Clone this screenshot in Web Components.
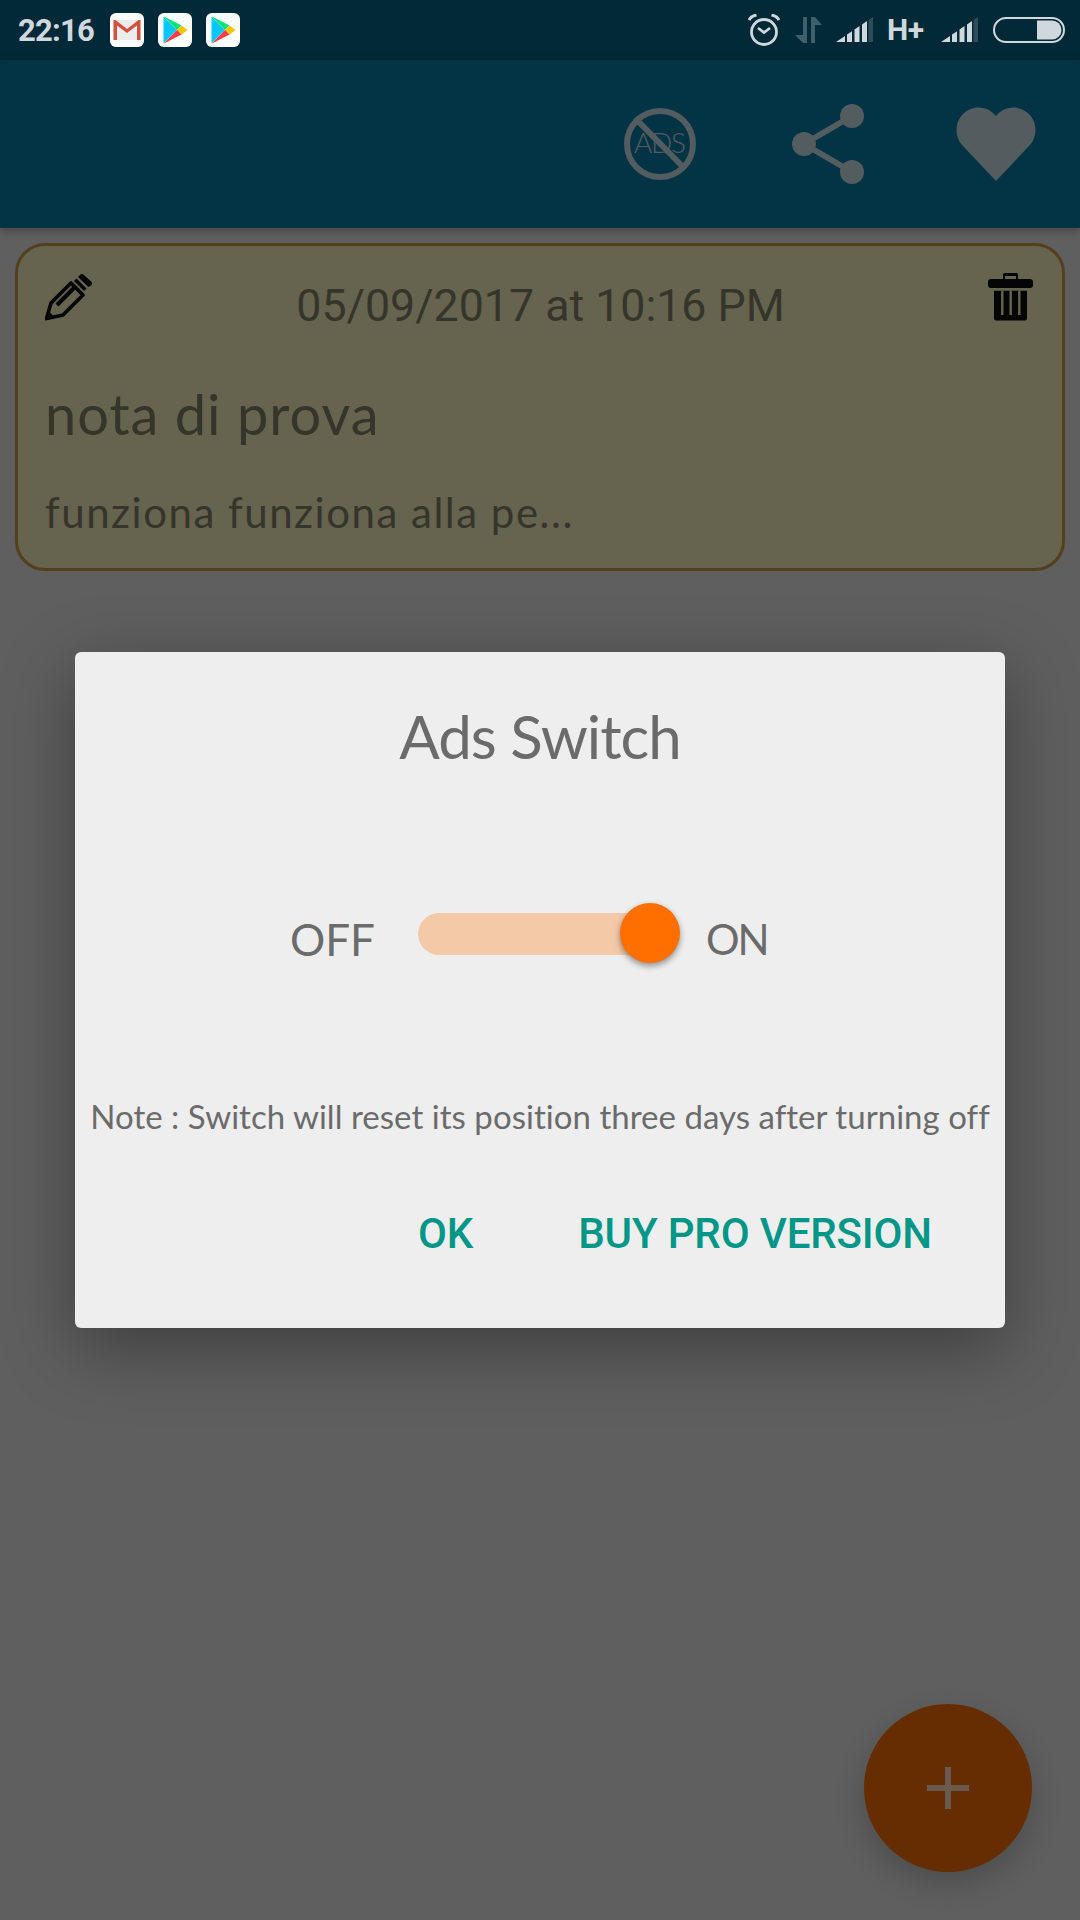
<!DOCTYPE html>
<html>
<head>
<meta charset="utf-8">
<style>
  html, body { margin: 0; padding: 0; background: #5f5f5f; }
</style>
</head>
<body>
<app-shell>
  <note-card date="05/09/2017 at 10:16 PM" title="nota di prova" text="funziona funziona alla pe..."></note-card>
  <ads-dialog slot="overlay"></ads-dialog>
  <fab-button slot="overlay"></fab-button>
</app-shell>

<script>
const PLAY = `<svg width="34" height="34" viewBox="0 0 34 34"><rect width="34" height="34" rx="6" fill="#fff"/>
  <path d="M5.500 3.500L19 17L5.500 30.500Z" fill="#00c8ff"/>
  <path d="M5.500 3.300L23.500 12.500L19 17Z" fill="#00e676"/>
  <path d="M23.500 12.500L29.600 17L23.500 21.500L19 17Z" fill="#ffc400"/>
  <path d="M5.500 30.700L19 17L23.500 21.500Z" fill="#ff3a44"/></svg>`;

const SIGNAL = `<svg width="37" height="26" viewBox="0 0 37 26">
  <path d="M0 25L9 19V25Z" fill="#cfd8dc"/>
  <path d="M11 17.600L16 14.200V25H11Z" fill="#cfd8dc"/>
  <path d="M18.500 12.500L23.500 9.100V25H18.500Z" fill="#cfd8dc"/>
  <path d="M26 7.400L31 4V25H26Z" fill="#cfd8dc"/>
  <path d="M32.500 3L37 0V25H32.500Z" fill="#2f4d59"/></svg>`;

class StatusBar extends HTMLElement {
  constructor() {
    super();
    this.attachShadow({ mode: 'open' });
  }
  connectedCallback() {
    this.shadowRoot.innerHTML = `
      <style>
        :host { display: flex; align-items: center; height: 60px; background: #022937; padding: 0 15px 0 18px; box-sizing: border-box; color: #cfd8dc; font-family: Roboto, sans-serif; }
        .time { font-size: 31px; font-weight: 700; letter-spacing: -0.8px; width: 92px; }
        .apps { display: flex; gap: 14px; }
        .apps svg { display: block; }
        .sys { margin-left: auto; display: flex; align-items: center; }
        .sys svg { display: block; }
        .hplus { font-size: 30px; font-weight: 700; line-height: 30px; width: 36px; margin: 0 18px 0 14px; letter-spacing: -0.5px; }
      </style>
      <span class="time">22:16</span>
      <div class="apps">
        <svg width="34" height="34" viewBox="0 0 34 34"><rect width="34" height="34" rx="6" fill="#fff"/>
          <rect x="3.500" y="7" width="27" height="20" fill="#ececec"/>
          <path d="M3.500 27V7H5.500L17 16L28.500 7H30.500V27H27V12.500L17 20L7 12.500V27Z" fill="#d1513f"/></svg>
        ${PLAY}${PLAY}
      </div>
      <div class="sys">
        <svg width="32" height="32" viewBox="0 0 32 32" style="margin-right:15px">
          <circle cx="16" cy="18" r="12.500" fill="none" stroke="#cfd8dc" stroke-width="2.800"/>
          <path d="M10 14L16 18.500L22 14" fill="none" stroke="#cfd8dc" stroke-width="2.800"/>
          <path d="M1 6Q3 2 8.500 1M23.500 1Q29 2 31 6" fill="none" stroke="#cfd8dc" stroke-width="3"/></svg>
        <svg width="27" height="26" viewBox="0 0 27 26" style="margin-right:14px">
          <path d="M8 0H12V26H8L0 18H8Z" fill="#3f5f6b"/>
          <path d="M16 26V0H20L27 8H20V26Z" fill="#3f5f6b"/></svg>
        ${SIGNAL}
        <span class="hplus">H+</span>
        ${SIGNAL}
        <svg width="72" height="26" viewBox="0 0 72 26" style="margin-left:15px">
          <rect x="1" y="1" width="70" height="24" rx="12" fill="none" stroke="#cfd8dc" stroke-width="2"/>
          <path d="M44 3.500H59A9.500 9.500 0 0 1 59 22.500H44Z" fill="#cfd8dc"/></svg>
      </div>
    `;
  }
}
customElements.define('status-bar', StatusBar);

class AppBar extends HTMLElement {
  constructor() {
    super();
    this.attachShadow({ mode: 'open' });
  }
  connectedCallback() {
    this.shadowRoot.innerHTML = `
      <style>
        :host { display: flex; justify-content: flex-end; align-items: center; height: 168px; background: #033445; padding-right: 44px; box-sizing: border-box; box-shadow: 0 3px 8px rgba(0,0,0,.28); position: relative; }
        svg { display: block; }
      </style>
      <svg width="72" height="72" viewBox="0 0 72 72" style="margin-right:96px">
        <circle cx="36" cy="36" r="33" fill="none" stroke="#535c5e" stroke-width="6"/>
        <path d="M11 10L61 61" stroke="#535c5e" stroke-width="6"/>
        <text x="10" y="45" textLength="52" lengthAdjust="spacing" font-family="Lato, sans-serif" font-size="28" font-weight="300" fill="#535c5e">ADS</text>
      </svg>
      <svg width="72" height="80" viewBox="0 0 72 80" style="margin-right:92px">
        <path d="M12 40L60 12M12 40L60 68" stroke="#535c5e" stroke-width="6"/>
        <circle cx="12" cy="40" r="12" fill="#535c5e"/>
        <circle cx="60" cy="12" r="12" fill="#535c5e"/>
        <circle cx="60" cy="68" r="12" fill="#535c5e"/>
      </svg>
      <svg width="80" height="74" viewBox="0 0 80 74">
        <path d="M40 74L6 38C-2 29 -1 15 7 7C16 -2 31 -2 40 9C49 -2 64 -2 73 7C81 15 82 29 74 38Z" fill="#535c5e"/>
      </svg>
    `;
  }
}
customElements.define('app-bar', AppBar);

class NoteCard extends HTMLElement {
  constructor() {
    super();
    this.attachShadow({ mode: 'open' });
  }
  connectedCallback() {
    const date = this.getAttribute('date') || '';
    const title = this.getAttribute('title') || '';
    const text = this.getAttribute('text') || '';
    this.shadowRoot.innerHTML = `
      <style>
        :host { display: block; margin: 15px 15px 0; height: 328px; box-sizing: border-box; background: #66634f; border: 3px solid #54401f; border-radius: 30px; padding: 27px 29px 0 27px; color: #35352b; font-family: Lato, sans-serif; }
        .top { display: flex; justify-content: space-between; align-items: flex-start; height: 48px; }
        .top svg { display: block; }
        .date { font-family: Roboto, sans-serif; font-size: 44.700px; line-height: 54px; padding-top: 6px; }
        .title { font-size: 56px; line-height: 68px; margin-top: 59px; letter-spacing: 1px; }
        .text { font-size: 42px; line-height: 54px; margin-top: 37px; letter-spacing: 1.5px; }
      </style>
      <div class="top">
        <svg width="48" height="48" viewBox="0 0 48 48">
          <path d="M1.500 45.500L6 30L26 10L38 22L18 42Z" fill="none" stroke="#050505" stroke-width="3.600" stroke-linejoin="round"/>
          <path d="M12 32L29 15" stroke="#050505" stroke-width="4"/>
          <path d="M0 47.500L2.500 37L10 44.500Z" fill="#050505"/>
          <path d="M29 8L31.500 5.500L41.500 15.500L39 18Z" fill="#050505"/>
          <path d="M33 4L35 2Q37 0 39 2L46 8.500Q48 10.500 46 12.500L43.500 14Z" fill="#050505"/>
        </svg>
        <span class="date">${date}</span>
        <svg width="45" height="48" viewBox="0 0 45 48">
          <path d="M15 6V1.500Q15 0 16.500 0H28.500Q30 0 30 1.500V6H28V3H17V6Z" fill="#050505"/>
          <rect x="0" y="6" width="45" height="9" rx="3" fill="#050505"/>
          <path d="M6 17.700H39V45.500Q39 47.500 37 47.500H8Q6 47.500 6 45.500Z" fill="#050505"/>
          <path d="M14.300 17.700V42M22.700 17.700V42M31.300 17.700V42" stroke="#66634f" stroke-width="2.400"/>
        </svg>
      </div>
      <div class="title">${title}</div>
      <div class="text">${text}</div>
    `;
  }
}
customElements.define('note-card', NoteCard);

class AdsToggle extends HTMLElement {
  constructor() {
    super();
    this.attachShadow({ mode: 'open' });
  }
  connectedCallback() {
    this.shadowRoot.innerHTML = `
      <style>
        :host { display: block; position: relative; width: 262px; height: 60px; }
        .track { position: absolute; left: 0; top: 10px; width: 240px; height: 42px; border-radius: 21px; background: #f3c9a8; }
        .knob { position: absolute; right: 0; top: 0; width: 60px; height: 60px; border-radius: 50%; background: #ff6f00; box-shadow: 0 3px 6px rgba(0,0,0,.4); }
      </style>
      <div class="track"></div>
      <div class="knob"></div>
    `;
  }
}
customElements.define('ads-toggle', AdsToggle);

class AdsDialog extends HTMLElement {
  constructor() {
    super();
    this.attachShadow({ mode: 'open' });
  }
  connectedCallback() {
    this.shadowRoot.innerHTML = `
      <style>
        :host { display: block; width: 930px; height: 676px; box-sizing: border-box; background: #eeeeee; border-radius: 6px; box-shadow: 0 20px 70px rgba(0,0,0,.35); color: #6b6b6b; font-family: Lato, sans-serif; padding-top: 44px; }
        .title { font-size: 60px; line-height: 80px; text-align: center; letter-spacing: -1px; }
        .row { display: flex; align-items: center; margin-top: 127px; padding-left: 215px; height: 60px; }
        .lbl { font-size: 44px; line-height: 60px; margin-top: 12px; }
        .on { font-size: 42px; letter-spacing: -2px; }
        ads-toggle { margin: 0 26px 0 43px; }
        .note { font-size: 33px; line-height: 50px; margin-top: 128px; text-align: center; white-space: nowrap; letter-spacing: .03px; }
        .actions { display: flex; justify-content: flex-end; gap: 105px; margin-top: 68px; padding-right: 73px; font-family: Roboto, sans-serif; font-weight: 500; font-size: 42px; line-height: 50px; letter-spacing: -.15px; color: #009688; }
      </style>
      <div class="title">Ads Switch</div>
      <div class="row">
        <span class="lbl">OFF</span>
        <ads-toggle></ads-toggle>
        <span class="lbl on">ON</span>
      </div>
      <div class="note">Note : Switch will reset its position three days after turning off</div>
      <div class="actions">
        <span>OK</span>
        <span>BUY PRO VERSION</span>
      </div>
    `;
  }
}
customElements.define('ads-dialog', AdsDialog);

class FabButton extends HTMLElement {
  constructor() {
    super();
    this.attachShadow({ mode: 'open' });
  }
  connectedCallback() {
    this.shadowRoot.innerHTML = `
      <style>
        :host { display: flex; align-items: center; justify-content: center; position: absolute; right: 48px; bottom: 48px; width: 168px; height: 168px; border-radius: 50%; background: #662e00; box-shadow: 0 12px 30px rgba(0,0,0,.2); }
        svg { display: block; }
      </style>
      <svg width="42" height="42" viewBox="0 0 42 42"><path d="M18 0H24V18H42V24H24V42H18V24H0V18H18Z" fill="#6b5a50"/></svg>
    `;
  }
}
customElements.define('fab-button', FabButton);

class AppShell extends HTMLElement {
  constructor() {
    super();
    this.attachShadow({ mode: 'open' });
  }
  connectedCallback() {
    this.shadowRoot.innerHTML = `
      <style>
        :host { display: flex; flex-direction: column; position: relative; width: 1080px; height: 1920px; overflow: hidden; background: #5f5f5f; }
        .overlay { position: absolute; left: 0; right: 0; top: 60px; bottom: 0; display: flex; align-items: center; justify-content: center; }
      </style>
      <status-bar></status-bar>
      <app-bar></app-bar>
      <slot></slot>
      <div class="overlay"><slot name="overlay"></slot></div>
    `;
  }
}
customElements.define('app-shell', AppShell);
</script>
</body>
</html>
